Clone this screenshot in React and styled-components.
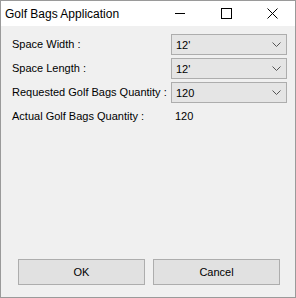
import { Fragment } from "react";
import styled, { createGlobalStyle } from "styled-components";

const Global = createGlobalStyle`
  html, body { margin: 0; padding: 0; background: #ffffff; }
  body { font-family: "Liberation Sans", Arial, sans-serif; }
`;

const Window = styled.div`
  width: 296px;
  height: 298px;
  box-sizing: border-box;
  border: 1px solid #9a9a9a;
  display: flex;
  flex-direction: column;
  background: #f0f0f0;
`;

const TitleBar = styled.div`
  height: 25px;
  background: #ffffff;
  display: flex;
  align-items: center;
  padding-left: 4px;
`;

const Title = styled.div`
  flex: 1;
  font-size: 12px;
  color: #000;
`;

const CaptionButton = styled.div`
  width: 46px;
  height: 25px;
  display: flex;
  align-items: center;
  justify-content: center;
`;

const Client = styled.div`
  flex: 1;
  display: flex;
  flex-direction: column;
  padding: 8px 8px 12px 11px;
`;

const Form = styled.div`
  display: grid;
  grid-template-columns: 159px 116px;
  row-gap: 3px;
  align-items: center;
`;

const Label = styled.div`
  font-size: 11px;
  color: #000;
  height: 21px;
  line-height: 21px;
  white-space: nowrap;
`;

const Combo = styled.div`
  height: 21px;
  box-sizing: border-box;
  border: 1px solid #adadad;
  background: #e5e5e5;
  display: flex;
  align-items: center;
  justify-content: space-between;
  padding: 0 5px 0 4px;
  font-size: 11px;
  color: #000;
`;

const Value = styled.div`
  font-size: 11px;
  padding-left: 4px;
  height: 21px;
  line-height: 21px;
`;

const Buttons = styled.div`
  margin-top: auto;
  display: flex;
  gap: 8px;
  padding-left: 6px;
`;

const Button = styled.div`
  width: 127px;
  height: 26px;
  box-sizing: border-box;
  border: 1px solid #adadad;
  background: #e1e1e1;
  display: flex;
  align-items: center;
  justify-content: center;
  font-size: 11px;
  color: #000;
`;

const Chevron = () => (
  <svg width="9" height="5" viewBox="0 0 9 5">
    <path d="M0.5 0.5 L4.5 4.5 L8.5 0.5" fill="none" stroke="#555" strokeWidth="1" />
  </svg>
);

const rows = [
  { label: "Space Width :", value: "12'" },
  { label: "Space Length :", value: "12'" },
  { label: "Requested Golf Bags Quantity :", value: "120" },
];

export default function App() {
  return (
    <>
      <Global />
      <Window>
        <TitleBar>
          <Title>Golf Bags Application</Title>
          <CaptionButton>
            <svg width="11" height="11" viewBox="0 0 11 11">
              <path d="M0 5.5 H10" stroke="#000" strokeWidth="1" />
            </svg>
          </CaptionButton>
          <CaptionButton>
            <svg width="11" height="11" viewBox="0 0 11 11">
              <rect x="0.5" y="0.5" width="10" height="10" fill="none" stroke="#000" />
            </svg>
          </CaptionButton>
          <CaptionButton>
            <svg width="11" height="11" viewBox="0 0 11 11">
              <path d="M0.5 0.5 L10.5 10.5 M10.5 0.5 L0.5 10.5" stroke="#000" strokeWidth="1" />
            </svg>
          </CaptionButton>
        </TitleBar>
        <Client>
          <Form>
            {rows.map((r) => (
              <Fragment key={r.label}>
                <Label>{r.label}</Label>
                <Combo>
                  <span>{r.value}</span>
                  <Chevron />
                </Combo>
              </Fragment>
            ))}
            <Label>Actual Golf Bags Quantity :</Label>
            <Value>120</Value>
          </Form>
          <Buttons>
            <Button>OK</Button>
            <Button>Cancel</Button>
          </Buttons>
        </Client>
      </Window>
    </>
  );
}
